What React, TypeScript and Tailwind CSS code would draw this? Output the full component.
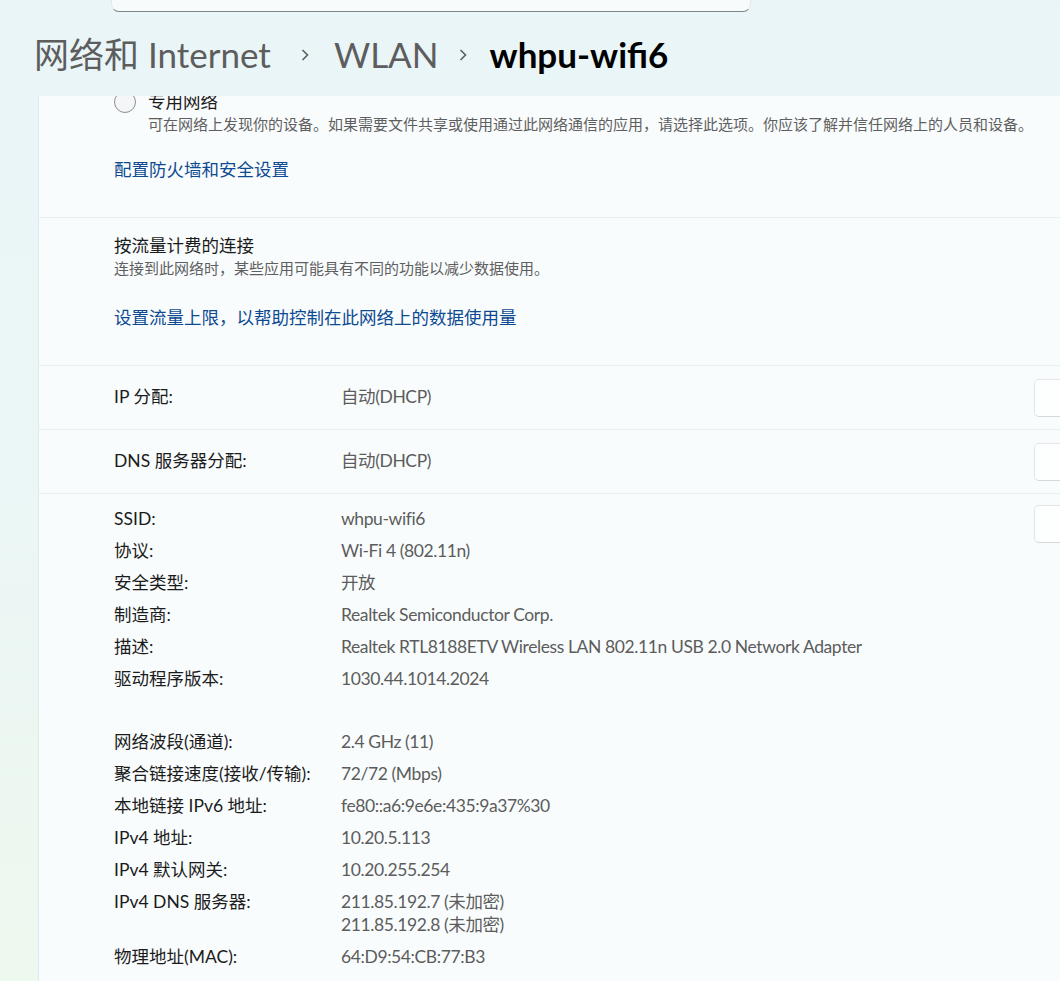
import React from 'react';

const FONT = { fontFamily: 'Lato, "Noto Sans CJK SC", sans-serif' };

interface InfoRow {
  label: string;
  value: string[];
}

const TOP_ROWS: InfoRow[] = [
  { label: 'SSID:', value: ['whpu-wifi6'] },
  { label: '协议:', value: ['Wi-Fi 4 (802.11n)'] },
  { label: '安全类型:', value: ['开放'] },
  { label: '制造商:', value: ['Realtek Semiconductor Corp.'] },
  { label: '描述:', value: ['Realtek RTL8188ETV Wireless LAN 802.11n USB 2.0 Network Adapter'] },
  { label: '驱动程序版本:', value: ['1030.44.1014.2024'] }
];

const BOTTOM_ROWS: InfoRow[] = [
  { label: '网络波段(通道):', value: ['2.4 GHz (11)'] },
  { label: '聚合链接速度(接收/传输):', value: ['72/72 (Mbps)'] },
  { label: '本地链接 IPv6 地址:', value: ['fe80::a6:9e6e:435:9a37%30'] },
  { label: 'IPv4 地址:', value: ['10.20.5.113'] },
  { label: 'IPv4 默认网关:', value: ['10.20.255.254'] },
  { label: 'IPv4 DNS 服务器:', value: ['211.85.192.7 (未加密)', '211.85.192.8 (未加密)'] },
  { label: '物理地址(MAC):', value: ['64:D9:54:CB:77:B3'] }
];

function Chevron({ className }: { className: string }) {
  return (
    <svg width="8" height="14" viewBox="0 0 8 14" className={className}>
      <path d="M1.5 2 L6.5 7 L1.5 12" fill="none" stroke="#5d5d5d" strokeWidth="1.6" />
    </svg>
  );
}

function EditButton() {
  return (
    <div className="w-[80px] h-[38px] shrink-0 rounded-[5px] border border-[#e1e6e8] border-b-[#d3d8da] bg-[#fdfefe]" />
  );
}

function Row({ row }: { row: InfoRow }) {
  return (
    <div className="flex">
      <div className="w-[227px] shrink-0 leading-[32px] text-[#1b1b1b]">{row.label}</div>
      <div className="text-[#5c5c5c] tracking-[-0.4px]">
        {row.value.map((v, i) => (
          <div key={v} className={`leading-[32px] ${i > 0 ? '-mt-[9px]' : ''}`}>{v}</div>
        ))}
      </div>
    </div>
  );
}

export default function App() {
  return (
    <div
      className="w-[1060px] h-[981px] overflow-hidden bg-linear-to-b from-[#eaf5f8] via-[#ebf6f6] to-[#edf8ee]"
      style={FONT}
    >
      {/* search box, scrolled mostly out of view */}
      <div className="ml-[111px] w-[640px] h-[12px] rounded-b-[8px] border-x border-b border-[#e2e8ea] border-b-[#7f898c] bg-[#f7fbfc]" />

      {/* breadcrumb */}
      <div className="mt-[18px] ml-[34px] h-[48px] flex items-center text-[35px] leading-none">
        <span className="text-[#5d5d5d]">网络和 Internet</span>
        <Chevron className="ml-[30px] mr-[25px] mt-[2px]" />
        <span className="text-[#5d5d5d]">WLAN</span>
        <Chevron className="ml-[20px] mr-[23px] mt-[2px]" />
        <span className="text-black font-bold">whpu-wifi6</span>
      </div>

      {/* card */}
      <div className="mt-[18px] ml-[38px] w-[1100px] border-l border-[#e0e9ec] bg-[#f9fcfd] text-[17.5px]">
        {/* network profile section */}
        <div className="h-[121px] overflow-hidden pl-[75px]">
          <div className="-mt-[6px] flex items-start">
            <div className="mt-[1px] w-[22px] h-[22px] rounded-full border border-[#8c9092] bg-[#f4f6f7]" />
            <div className="ml-[12px]">
              <div className="leading-[24px] text-[#1b1b1b]">专用网络</div>
              <div className="text-[15px] leading-[20px] text-[#5f5f5f]">
                可在网络上发现你的设备。如果需要文件共享或使用通过此网络通信的应用，请选择此选项。你应该了解并信任网络上的人员和设备。
              </div>
            </div>
          </div>
          <div className="mt-[24px] leading-[24px] text-[#0d4a92]">配置防火墙和安全设置</div>
        </div>
        <div className="h-px bg-[#e8f0f2]" />

        {/* metered connection */}
        <div className="h-[147px] pl-[75px] pt-[16px]">
          <div className="leading-[24px] text-[#1b1b1b]">按流量计费的连接</div>
          <div className="text-[15px] leading-[20px] text-[#5f5f5f]">连接到此网络时，某些应用可能具有不同的功能以减少数据使用。</div>
          <div className="mt-[28px] leading-[24px] text-[#0d4a92]">设置流量上限，以帮助控制在此网络上的数据使用量</div>
        </div>
        <div className="h-px bg-[#e8f0f2]" />

        {/* ip assignment */}
        <div className="h-[63px] pl-[75px] pr-[24px] flex items-center">
          <div className="w-[227px] text-[#1b1b1b]">IP 分配:</div>
          <div className="flex-1 text-[#5c5c5c] tracking-[-0.4px]">自动(DHCP)</div>
          <EditButton />
        </div>
        <div className="h-px bg-[#e8f0f2]" />

        <div className="h-[63px] pl-[75px] pr-[24px] flex items-center">
          <div className="w-[227px] text-[#1b1b1b]">DNS 服务器分配:</div>
          <div className="flex-1 text-[#5c5c5c] tracking-[-0.4px]">自动(DHCP)</div>
          <EditButton />
        </div>
        <div className="h-px bg-[#e8f0f2]" />

        {/* properties */}
        <div className="pl-[75px] pr-[24px] pt-[9px] pb-[20px] flex">
          <div className="flex-1">
            {TOP_ROWS.map(r => (
              <Row key={r.label} row={r} />
            ))}
            <div className="h-[31px]" />
            {BOTTOM_ROWS.map(r => (
              <Row key={r.label} row={r} />
            ))}
          </div>
          <div className="mt-[2px]">
            <EditButton />
          </div>
        </div>
      </div>
    </div>
  );
}
